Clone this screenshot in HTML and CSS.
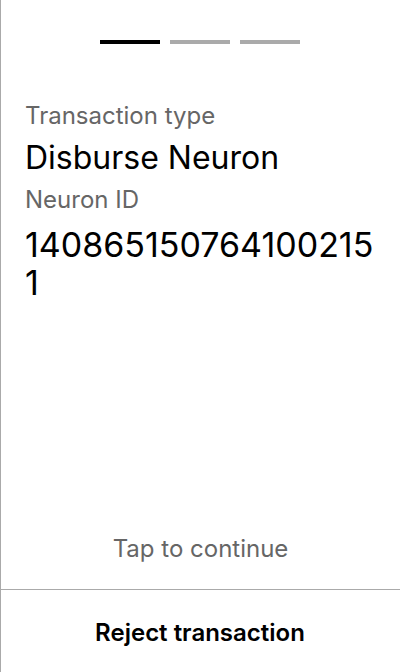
FILE: index.html
```html
<!DOCTYPE html>
<html>
<head>
<meta charset="utf-8">
<link rel="stylesheet" href="styles.css">
</head>
<body>
<div class="screen">
  <div class="progress">
    <span class="seg active"></span>
    <span class="seg"></span>
    <span class="seg"></span>
  </div>
  <div class="content">
    <div class="label">Transaction type</div>
    <div class="value">Disburse Neuron</div>
    <div class="label">Neuron ID</div>
    <div class="value big">1408651507641002151</div>
  </div>
  <div class="tap">Tap to continue</div>
  <div class="reject">Reject transaction</div>
</div>
</body>
</html>
```
FILE: styles.css
```css
html, body {
  margin: 0;
  padding: 0;
  background: #fff;
}
body {
  font-family: Inter, "Noto Sans", sans-serif;
  color: #000;
}
.screen {
  width: 400px;
  height: 672px;
  box-sizing: border-box;
  border-left: 1px solid #aaa;
  display: flex;
  flex-direction: column;
}
.progress {
  display: flex;
  justify-content: center;
  gap: 10px;
  padding-top: 40px;
  margin-left: -1px;
}
.seg {
  width: 60px;
  height: 4px;
  background: #aaa;
}
.seg.active {
  background: #000;
}
.content {
  padding: 56px 24px 0;
  flex: 1;
}
.label {
  font-size: 24px;
  line-height: 32px;
  color: #666;
}
.value {
  font-size: 32px;
  line-height: 40px;
  margin: 6px 0;
}
.value.big {
  font-size: 34px;
  line-height: 38px;
  margin-top: 10px;
  word-break: break-all;
}
.tap {
  text-align: center;
  font-size: 24px;
  line-height: 30px;
  color: #666;
  padding-bottom: 25px;
}
.reject {
  border-top: 1px solid #aaa;
  height: 83px;
  display: flex;
  align-items: center;
  justify-content: center;
  font-size: 24px;
  font-weight: 600;
  margin-left: -1px;
  padding-top: 2px;
  box-sizing: border-box;
}
```
